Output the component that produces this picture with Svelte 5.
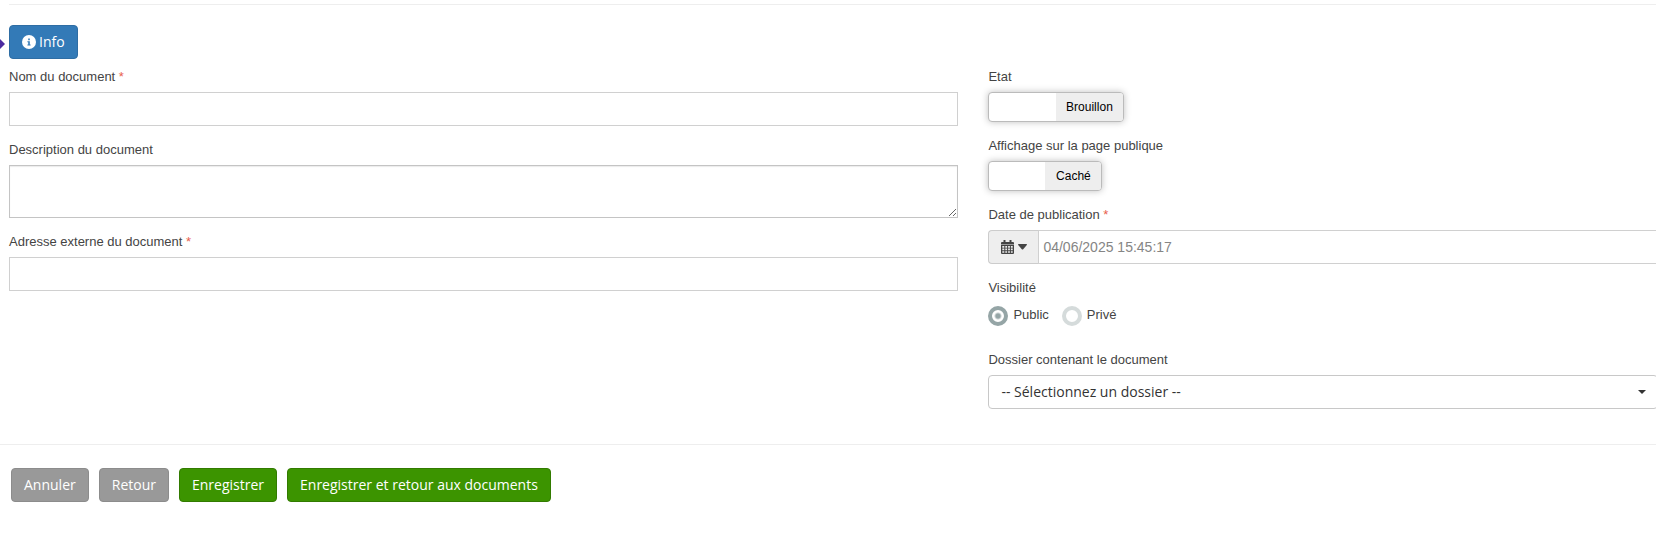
<script>
  let name = $state("");
  let description = $state("");
  let url = $state("");
  let published = $state(false);
  let visible = $state(false);
  let date = $state("");
  let visibility = $state("public");
  let folder = $state("");

  const visibilities = [
    { value: "public", label: "Public" },
    { value: "private", label: "Privé" },
  ];
</script>

<main>
  <hr />
  <div class="toolbar">
    <span class="marker"></span>
    <button type="button" class="btn btn-primary">
      <svg width="14" height="14" viewBox="0 0 14 14" aria-hidden="true">
        <circle cx="7" cy="7" r="7" fill="#fff" />
        <path d="M6.2 3.6h1.6v1.6H6.2zM5.4 6.2h2.4v3.2h.8v1H5.4v-1h.8V7.2h-.8z" fill="#337ab7" />
      </svg>
      Info
    </button>
  </div>

  <form id="document-form" class="row">
    <div class="col">
      <div class="form-group">
        <label for="name">Nom du document <span class="required">*</span></label>
        <input id="name" type="text" class="form-control" bind:value={name} />
      </div>
      <div class="form-group">
        <label for="description">Description du document</label>
        <textarea id="description" class="form-control" bind:value={description}></textarea>
      </div>
      <div class="form-group">
        <label for="url">Adresse externe du document <span class="required">*</span></label>
        <input id="url" type="text" class="form-control" bind:value={url} />
      </div>
    </div>

    <div class="col">
      <div class="form-group">
        <label for="published">Etat</label>
        <div class="switch">
          <input id="published" type="checkbox" bind:checked={published} />
          <span class="handle"></span>
          <span class="state">{published ? "Publié" : "Brouillon"}</span>
        </div>
      </div>
      <div class="form-group">
        <label for="visible">Affichage sur la page publique</label>
        <div class="switch">
          <input id="visible" type="checkbox" bind:checked={visible} />
          <span class="handle"></span>
          <span class="state">{visible ? "Visible" : "Caché"}</span>
        </div>
      </div>
      <div class="form-group">
        <label for="date">Date de publication <span class="required">*</span></label>
        <div class="input-group">
          <button type="button" class="addon" aria-label="Calendrier">
            <svg width="13" height="14" viewBox="0 0 13 14" aria-hidden="true">
              <path
                fill="#444"
                fill-rule="evenodd"
                d="M2.5 0h2v2h4V0h2v2H12q1 0 1 1v1H0V3q0-1 1-1h1.500zM0 4.500h13V13q0 1-1 1H1q-1 0-1-1zM1.300 6v1.700h2V6zM4.300 6v1.700h1.800V6zM7.100 6v1.700h1.800V6zM9.900 6v1.700h1.800V6zM1.300 8.600v1.700h2V8.600zM4.300 8.600v1.700h1.800V8.600zM7.100 8.600v1.700h1.800V8.600zM9.900 8.600v1.700h1.800V8.600zM1.300 11.200v1.600h2v-1.600zM4.300 11.200v1.600h1.800v-1.600zM7.100 11.200v1.600h1.800v-1.600zM9.900 11.200v1.600h1.800v-1.600z"
              />
            </svg>
            <svg width="9" height="6" viewBox="0 0 9 6" aria-hidden="true">
              <path d="M.6 0h7.800q.9.200.4 1L5.200 5.200q-.7.600-1.400 0L.2 1Q-.3.200.6 0z" fill="#444" />
            </svg>
          </button>
          <input id="date" type="text" class="form-control" placeholder="04/06/2025 15:45:17" bind:value={date} />
        </div>
      </div>
      <fieldset class="form-group">
        <legend>Visibilité</legend>
        <div class="radios">
          {#each visibilities as v}
            <label class="radio">
              <input type="radio" name="visibility" value={v.value} bind:group={visibility} />
              <span>{v.label}</span>
            </label>
          {/each}
        </div>
      </fieldset>
      <div class="form-group">
        <label for="folder">Dossier contenant le document</label>
        <div class="select">
          <select id="folder" bind:value={folder}>
            <option value="">-- Sélectionnez un dossier --</option>
          </select>
          <svg width="8" height="4" viewBox="0 0 8 4" aria-hidden="true">
            <path d="M0 0h8L4 4z" fill="#333" />
          </svg>
        </div>
      </div>
    </div>
  </form>

  <footer>
    <button type="button" class="btn btn-grey">Annuler</button>
    <button type="button" class="btn btn-grey">Retour</button>
    <button type="submit" form="document-form" class="btn btn-green">Enregistrer</button>
    <button type="submit" form="document-form" class="btn btn-green">Enregistrer et retour aux documents</button>
  </footer>
</main>

<style>
  :global(body) {
    margin: 0;
    background-color: #fff;
  }

  main {
    padding-top: 4px;
    color: #444;
    font-family: "Liberation Sans", Arial, sans-serif;
    font-size: 13px;
    line-height: 20px;
    overflow: hidden;
  }

  main * {
    box-sizing: border-box;
  }

  hr {
    margin: 0 0 20px 9px;
    border: 0;
    border-top: 1px solid #eee;
  }

  .toolbar {
    position: relative;
    display: flex;
    padding-left: 9px;
    margin-bottom: 8px;
  }

  .marker {
    position: absolute;
    left: 0;
    top: 14px;
    border: 5px solid transparent;
    border-left: 5px solid #4b2ba0;
    border-right: 0;
  }

  .btn {
    display: flex;
    align-items: center;
    gap: 3px;
    height: 34px;
    padding: 0 12px;
    border: 1px solid;
    border-radius: 4px;
    color: #fff;
    font-family: "Open Sans", sans-serif;
    font-size: 14px;
    line-height: 20px;
    cursor: pointer;
  }

  .btn-primary {
    background-color: #337ab7;
    border-color: #2e6da4;
  }

  .btn-grey {
    background-color: #999;
    border-color: #8c8c8c;
  }

  .btn-green {
    background-color: #3c9400;
    border-color: #327b00;
  }

  .row {
    display: grid;
    grid-template-columns: 7fr 5fr;
    margin: 0 -17px 0 -6px;
  }

  .col {
    min-width: 0;
    padding: 0 15px;
  }

  .form-group {
    min-width: 0;
    margin: 0 0 14px;
    padding: 0;
    border: 0;
  }

  .form-group > label,
  legend {
    display: block;
    margin-bottom: 5px;
    padding: 0;
  }

  .required {
    color: #e8604c;
  }

  .form-control {
    display: block;
    width: 100%;
    height: 34px;
    padding: 6px 4px;
    border: 1px solid #d0d0d0;
    border-radius: 0;
    background-color: #fff;
    color: #555;
    font-family: "Liberation Sans", Arial, sans-serif;
    font-size: 14px;
  }

  .form-control::placeholder {
    color: #858585;
  }

  textarea.form-control {
    height: 53px;
    border-color: #c4c4c4;
    box-shadow: inset 0 1px 1px rgba(0, 0, 0, 0.08);
    resize: vertical;
  }

  .switch {
    position: relative;
    display: inline-grid;
    grid-template-columns: 1fr 1fr;
    height: 30px;
    border: 1px solid #bbb;
    border-radius: 4px;
    background-color: #fff;
    box-shadow: 0 0 7px rgba(0, 0, 0, 0.25);
    vertical-align: top;
  }

  .switch input {
    position: absolute;
    inset: 0;
    width: 100%;
    height: 100%;
    margin: 0;
    opacity: 0;
    cursor: pointer;
  }

  .state {
    min-width: 56px;
    padding: 4px 10px;
    border-radius: 0 3px 3px 0;
    background-color: #eee;
    color: #000;
    font-size: 12px;
    text-align: center;
  }

  .input-group {
    display: flex;
  }

  .addon {
    display: flex;
    flex: none;
    align-items: center;
    justify-content: center;
    gap: 4px;
    width: 50px;
    padding: 0;
    border: 1px solid #ccc;
    border-right: 0;
    border-radius: 4px 0 0 4px;
    background-color: #eee;
  }

  .radios {
    display: flex;
    gap: 13px;
    padding-top: 3px;
    margin-bottom: 24px;
  }

  fieldset.form-group {
    margin-bottom: 0;
  }

  .radio {
    display: flex;
    gap: 5px;
    line-height: 18px;
  }

  .radio input {
    appearance: none;
    width: 20px;
    height: 20px;
    margin: 0;
    border: 4px solid #d5dbdb;
    border-radius: 50%;
  }

  .radio input:checked {
    border-color: #95a5a6;
    background: radial-gradient(circle, #95a5a6 0 2px, #fff 4px);
  }

  .select {
    display: grid;
    align-items: center;
  }

  .select select,
  .select svg {
    grid-area: 1 / 1;
  }

  .select select {
    appearance: none;
    width: 100%;
    height: 34px;
    padding: 0 12px 2px;
    border: 1px solid #c8c8c8;
    border-radius: 4px;
    background-color: #fff;
    color: #333;
    font-family: "Open Sans", sans-serif;
    font-size: 14px;
  }

  .select svg {
    justify-self: end;
    margin-right: 12px;
    pointer-events: none;
  }

  footer {
    display: flex;
    gap: 10px;
    margin-top: 21px;
    padding: 23px 11px 40px;
    border-top: 1px solid #eee;
  }
</style>
